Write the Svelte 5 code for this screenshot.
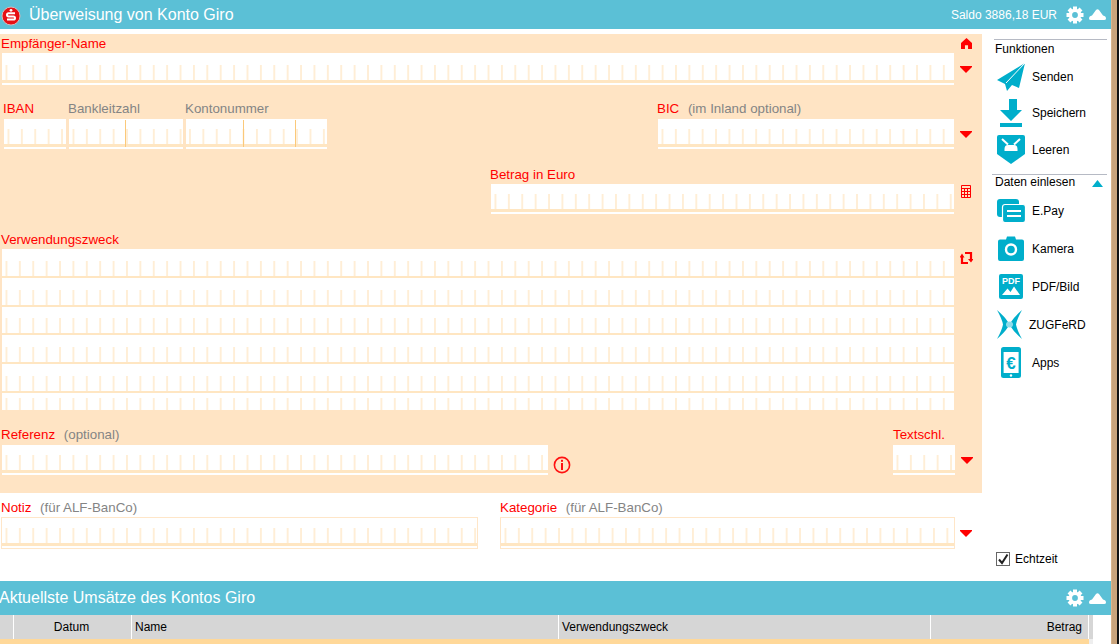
<script>
  const lines = [0, 1, 2, 3, 4];
  const tableCols = [
    { label: '', cls: 'c0' },
    { label: 'Datum', cls: 'c1' },
    { label: 'Name', cls: 'c2' },
    { label: 'Verwendungszweck', cls: 'c3' },
    { label: 'Betrag', cls: 'c4' },
    { label: '', cls: 'c5' }
  ];
  const gearTeeth = [0, 45, 90, 135, 180, 225, 270, 315];
</script>

{#snippet gear()}
  <svg class="gear" viewBox="-9 -9 18 18" width="18" height="18" aria-hidden="true">
    {#each gearTeeth as a}
      <rect x="-2" y="-8.5" width="4" height="5" fill="#fff" transform="rotate({a})" />
    {/each}
    <circle r="4.6" fill="none" stroke="#fff" stroke-width="3.4" />
  </svg>
{/snippet}

{#snippet cloud()}
  <svg class="cloud" viewBox="0 0 17 11" width="17" height="11" aria-hidden="true">
    <path d="M0 9.5Q0 7 3 6.5L7 1Q8.5-.4 10 1L14 6.5Q17 7 17 9.5Q17 11 15 11H2Q0 11 0 9.5Z" fill="#fff" />
  </svg>
{/snippet}

{#snippet down()}
  <svg class="down" viewBox="0 0 12 7" width="12" height="7" aria-hidden="true">
    <path d="M0 0H12V1L6 7L0 1Z" fill="#f00" />
  </svg>
{/snippet}

<div class="app">
  <div class="main">
    <header class="bar bar--top">
      <svg class="logo" viewBox="0 0 20 20" width="20" height="20" aria-hidden="true">
        <circle cx="10" cy="10" r="9" fill="#e60f14" stroke="#d8b8b8" stroke-width="1" />
        <circle cx="10" cy="4.3" r="1.4" fill="#fff" />
        <path d="M14 7.3H7.6Q6 7.3 6 9Q6 10.4 7.6 10.4H12.4Q14 10.4 14 12Q14 13.6 12.4 13.6H6" fill="none" stroke="#fff" stroke-width="2" />
      </svg>
      <h1 class="bar__title">Überweisung von Konto Giro</h1>
      <span class="saldo">Saldo 3886,18 EUR</span>
      {@render gear()}
      {@render cloud()}
    </header>

    <div class="body">
      <div class="left">
        <form class="peach">
          <div class="row row--name">
            <div class="fld grow">
              <div class="lbl">Empfänger-Name</div>
              <div class="comb comb--32"></div>
            </div>
            <div class="side side--name">
              <svg viewBox="0 0 10 10" width="11" height="11" aria-hidden="true">
                <path d="M5 0L10 4.6V10H6.4V6.6H3.6V10H0V4.6Z" fill="#f00" />
              </svg>
              {@render down()}
            </div>
          </div>

          <div class="row row--bank">
            <div class="fld iban">
              <div class="lbl">IBAN</div>
              <div class="comb"></div>
            </div>
            <div class="fld blz">
              <div class="lbl muted">Bankleitzahl</div>
              <div class="comb"></div>
            </div>
            <div class="fld konto">
              <div class="lbl muted">Kontonummer</div>
              <div class="comb"></div>
            </div>
            <div class="fld bic">
              <div class="lbl">BIC <span class="muted note">(im Inland optional)</span></div>
              <div class="comb"></div>
            </div>
            <div class="side side--bank">{@render down()}</div>
          </div>

          <div class="row row--amount">
            <div class="fld amount">
              <div class="lbl">Betrag in Euro</div>
              <div class="comb"></div>
            </div>
            <div class="side side--amount">
              <svg viewBox="0 0 10 13" width="10" height="13" aria-hidden="true">
                <path d="M.5.5H9.5V12.5H.5ZM.5 3.5H9.5M.5 6.5H9.5M.5 9.5H9.5M3.5 3.5V12.5M6.5 3.5V12.5" fill="none" stroke="#f00" stroke-width="1" />
              </svg>
            </div>
          </div>

          <div class="row row--purpose">
            <div class="fld grow">
              <div class="lbl">Verwendungszweck</div>
              {#each lines as l (l)}
                <div class="comb comb--line"></div>
              {/each}
              <div class="comb comb--last"></div>
            </div>
            <div class="side side--purpose">
              <svg viewBox="0 0 13 14" width="13" height="14" aria-hidden="true">
                <path d="M5 2H11V9M2 5V12H8" fill="none" stroke="#f00" stroke-width="2.2" />
                <path d="M8 8H13.5L11 11.5ZM-.5 6.5H4.5L2 2.5Z" fill="#f00" />
              </svg>
            </div>
          </div>

          <div class="row row--ref">
            <div class="fld ref">
              <div class="lbl">Referenz <span class="muted note">(optional)</span></div>
              <div class="comb"></div>
            </div>
            <svg class="info" viewBox="0 0 18 18" width="18" height="18" aria-hidden="true">
              <circle cx="9" cy="9" r="7.6" fill="none" stroke="#f11" stroke-width="1.6" />
              <rect x="8" y="3.8" width="2" height="2" fill="#f11" />
              <rect x="8" y="7" width="2" height="7" fill="#f11" />
            </svg>
            <div class="fld key">
              <div class="lbl">Textschl.</div>
              <div class="comb"></div>
            </div>
            <div class="side side--key">{@render down()}</div>
          </div>
        </form>

        <div class="row row--extra">
          <div class="fld note-f">
            <div class="lbl">Notiz <span class="muted note">(für ALF-BanCo)</span></div>
            <div class="comb comb--box"></div>
          </div>
          <div class="fld cat">
            <div class="lbl">Kategorie <span class="muted note">(für ALF-BanCo)</span></div>
            <div class="comb comb--box"></div>
          </div>
          <div class="side side--cat">{@render down()}</div>
        </div>
      </div>

      <aside class="tools">
        <section class="group">
          <div class="group__head">Funktionen</div>
          <div class="tool tool--a">
            <span class="tool__icon">
              <svg viewBox="0 0 28 28" width="28" height="28" aria-hidden="true">
                <path d="M28 0L0 17L8 21L10 28L15 22L22 25Z" fill="#00aecb" />
                <path d="M28 0L9 20" stroke="#fff" stroke-width="1" />
              </svg>
            </span>
            <span>Senden</span>
          </div>
          <div class="tool tool--a">
            <span class="tool__icon">
              <svg viewBox="0 0 22 28" width="22" height="28" aria-hidden="true">
                <path d="M9 0H17V11H22L11 22L0 11H9ZM0 24H22V28H0Z" fill="#00aecb" />
              </svg>
            </span>
            <span>Speichern</span>
          </div>
          <div class="tool tool--a">
            <span class="tool__icon">
              <svg viewBox="0 0 28 29" width="28" height="29" aria-hidden="true">
                <path d="M2 0H26Q28 0 28 2V19L14 29L0 19V2Q0 0 2 0Z" fill="#00aecb" />
                <path d="M5 4L11 9.5M23 4L17 9.5" stroke="#fff" stroke-width="2" />
                <path d="M11 10H17Q20.5 10 20.5 14V16H7.5V14Q7.5 10 11 10Z" fill="#fff" />
              </svg>
            </span>
            <span>Leeren</span>
          </div>
        </section>

        <section class="group group--data">
          <div class="group__head group__head--data">
            <span>Daten einlesen</span>
            <svg viewBox="0 0 11 7" width="11" height="7" aria-hidden="true">
              <path d="M5.5 0L11 7H0Z" fill="#00aecb" />
            </svg>
          </div>
          <div class="tool">
            <span class="tool__icon">
              <svg viewBox="0 0 28 23" width="28" height="23" aria-hidden="true">
                <rect x="0" y="0" width="22" height="18" rx="3" fill="#00aecb" />
                <rect x="5.5" y="5.5" width="23" height="18" rx="2.5" fill="#00aecb" stroke="#fff" stroke-width="1.2" />
                <path d="M10 12H24M10 17H24" stroke="#fff" stroke-width="2" />
              </svg>
            </span>
            <span>E.Pay</span>
          </div>
          <div class="tool">
            <span class="tool__icon">
              <svg viewBox="0 0 26 25" width="26" height="25" aria-hidden="true">
                <path d="M2 3.5H8L9 .5H17L18 3.5H24Q26 3.5 26 5.5V23Q26 25 24 25H2Q0 25 0 23V5.5Q0 3.5 2 3.5Z" fill="#00aecb" />
                <circle cx="13" cy="13.5" r="5" fill="none" stroke="#fff" stroke-width="2.4" />
              </svg>
            </span>
            <span>Kamera</span>
          </div>
          <div class="tool">
            <span class="tool__icon">
              <svg viewBox="0 0 24 25" width="24" height="25" aria-hidden="true">
                <rect width="24" height="25" rx="2" fill="#00aecb" />
                <text x="12" y="10" text-anchor="middle" class="pdf">PDF</text>
                <path d="M3 21L8.5 14.5L11.5 18L15 12.5L21 21Z" fill="#fff" />
              </svg>
            </span>
            <span>PDF/Bild</span>
          </div>
          <div class="tool tool--zug">
            <span class="tool__icon">
              <svg viewBox="0 0 28 29" width="28" height="29" aria-hidden="true">
                <path d="M0 0Q8 7 11 12L9.5 14.5L11 17Q8 22 0 29Q5 20 6 14.5Q5 9 0 0Z" fill="#00aecb" />
                <path d="M25 0Q17 7 14 12L15.5 14.5L14 17Q17 22 25 29Q20 20 19 14.5Q20 9 25 0Z" fill="#00aecb" />
                <ellipse cx="12.5" cy="14.5" rx="3.5" ry="3" fill="#8fdcea" />
              </svg>
            </span>
            <span>ZUGFeRD</span>
          </div>
          <div class="tool">
            <span class="tool__icon">
              <svg viewBox="0 0 20 31" width="20" height="31" aria-hidden="true">
                <rect width="20" height="31" rx="2.5" fill="#00aecb" />
                <rect x="2.6" y="5" width="15" height="21" fill="#fff" />
                <text x="10" y="21.5" text-anchor="middle" class="euro">€</text>
                <circle cx="10" cy="28.5" r="1.2" fill="#fff" />
              </svg>
            </span>
            <span>Apps</span>
          </div>
        </section>

        <label class="live">
          <span class="live__box">
            <svg viewBox="0 0 12 12" width="12" height="12" aria-hidden="true">
              <path d="M2 6.5L5 10L10.5 1.5" fill="none" stroke="#222" stroke-width="2" />
            </svg>
          </span>
          Echtzeit
        </label>
      </aside>
    </div>

    <header class="bar bar--list">
      <h2 class="bar__title bar__title--list">Aktuellste Umsätze des Kontos Giro</h2>
      {@render gear()}
      {@render cloud()}
    </header>

    <div class="thead">
      {#each tableCols as c}
        <div class="th {c.cls}">{c.label}</div>
      {/each}
    </div>
    <div class="tfirst">
      <div class="tfirst__fill"></div>
      <div class="tfirst__end"></div>
    </div>
  </div>
  <div class="strip"></div>
  <div class="edge"></div>
</div>

<style>
  :global(body) { overflow: hidden; background: #fff; }
  .app { display: flex; width: 1120px; height: 644px; overflow: hidden; font-family: "Liberation Sans", Arial, sans-serif; font-size: 12px; color: #000; background: #fff; }
  .main { width: 1111px; flex: none; }
  .strip { width: 6px; flex: none; background: #c9a47c; border-left: 1px solid #d8b48c; box-sizing: border-box; }
  .edge { width: 2px; flex: none; background: #111; }

  .bar { display: flex; align-items: center; background: #5bc0d6; color: #fff; }
  .bar--top { height: 29px; margin-bottom: 5px; padding-left: 1px; }
  .bar--list { height: 34px; }
  .logo { flex: none; margin-top: 2px; }
  .bar__title { margin: 0 0 0 8px; font-size: 16px; font-weight: 400; flex: 1; }
  .bar__title--list { margin-left: -1px; }
  .saldo { margin-right: 9px; }
  .gear { flex: none; margin-right: 5px; }
  .cloud { flex: none; margin-right: 5px; }

  .body { display: flex; height: 547px; }
  .left { width: 982px; flex: none; }
  .peach { height: 459px; background: #ffe4c4; box-sizing: border-box; padding-top: 2px; }
  .row { display: flex; align-items: flex-start; }
  .fld { flex: none; }
  .grow { width: 952px; margin-left: 2px; }
  .grow .lbl { margin-left: -1px; }
  .lbl { height: 17px; line-height: 15px; font-size: 13.33px; color: #f00; margin-bottom: 1px; white-space: nowrap; }
  .muted { color: #848484; }
  .note { margin-left: 5px; }

  .comb {
    height: 30px;
    background:
      linear-gradient(#ffe6c2, #ffe6c2) left 0 bottom 2px / 100% 3px no-repeat,
      linear-gradient(90deg, #ffeed6 1.5px, transparent 1.5px) left 3.5px bottom 5px / 13.4px 15px repeat-x,
      #fff;
  }
  .comb--32 { height: 32px; }
  .comb--line {
    height: 28.8px;
    background:
      linear-gradient(#ffe6c2, #ffe6c2) left 0 bottom 0 / 100% 2px no-repeat,
      linear-gradient(90deg, #ffeed6 1.5px, transparent 1.5px) left 3.5px bottom 2px / 13.4px 15px repeat-x,
      #fff;
  }
  .comb--last { height: 17px; background: linear-gradient(90deg, #ffeed6 1.5px, transparent 1.5px) left 3.5px bottom 0 / 13.4px 12px repeat-x, #fff; }
  .comb--box { height: 30px; border: 1px solid #ffe6c8; }

  .row--name .lbl { margin-bottom: 0; }
  .side { flex: none; display: flex; flex-direction: column; align-items: center; width: 24px; }
  .down { display: block; }
  .side--name { margin-left: 0; padding-top: 2px; gap: 17px; }
  .row--bank { margin-top: 16px; }
  .iban { width: 62px; margin-left: 4px; }
  .iban .lbl { margin-left: -1px; }
  .blz { width: 114px; margin-left: 3px; }
  .blz .lbl { margin-left: -1px; }
  .blz .comb {
    background:
      linear-gradient(#fbc97a, #fbc97a) left 56px top 1px / 1px 27px no-repeat,
      linear-gradient(#ffe6c2, #ffe6c2) left 0 bottom 2px / 100% 3px no-repeat,
      linear-gradient(90deg, #ffeed6 1.5px, transparent 1.5px) left 3.5px bottom 5px / 13.4px 15px repeat-x,
      #fff;
  }
  .konto { width: 141px; margin-left: 3px; }
  .konto .lbl { margin-left: -1px; }
  .konto .comb {
    background:
      linear-gradient(#fbc97a, #fbc97a) left 57px top 1px / 1px 27px no-repeat,
      linear-gradient(#fbc97a, #fbc97a) left 109px top 1px / 1px 27px no-repeat,
      linear-gradient(#ffe6c2, #ffe6c2) left 0 bottom 2px / 100% 3px no-repeat,
      linear-gradient(90deg, #ffeed6 1.5px, transparent 1.5px) left 3px bottom 5px / 13.4px 15px repeat-x,
      #fff;
  }
  .bic { width: 296px; margin-left: 331px; }
  .bic .lbl { margin-left: -1px; }
  .side--bank { padding-top: 30px; }
  .row--amount { margin-top: 18px; }
  .amount { width: 463px; margin-left: 491px; }
  .amount .lbl { margin-left: -1px; height: 16px; }
  .side--amount { padding-top: 18px; }
  .row--purpose { margin-top: 18px; }
  .row--purpose .lbl { height: 16px; }
  .side--purpose { padding-top: 19px; }
  .row--ref { margin-top: 17px; }
  .ref { width: 546px; margin-left: 2px; }
  .ref .lbl { margin: 0 0 2px -1px; height: 16px; }
  .info { flex: none; margin: 29px 0 0 5px; }
  .key { width: 62px; margin-left: 322px; }
  .key .lbl { margin-bottom: 2px; height: 16px; }
  .side--key { padding-top: 30px; }

  .row--extra { padding-top: 7px; }
  .note-f { width: 477px; margin-left: 1px; }
  .note-f .lbl { margin-bottom: 0; }
  .cat { width: 455px; margin-left: 22px; }
  .cat .lbl { margin-bottom: 0; }
  .note-f .comb, .cat .comb { box-sizing: border-box; height: 32px; }
  .side--cat { padding-top: 30px; margin-left: -1px; }

  .tools { flex: 1; display: flex; flex-direction: column; padding-top: 5px; box-sizing: border-box; }
  .group { margin: 0 4px 0 12px; border-top: 1px solid #b6bac4; }
  .group--data { margin: 5px 4px 0 10px; }
  .group__head { height: 19px; line-height: 18px; padding-left: 1px; }
  .group__head--data { display: flex; align-items: center; justify-content: space-between; height: 17px; line-height: 14px; padding: 0 4px 0 3px; }
  .group__head--data span { margin-top: -2px; }
  .group__head--data svg { margin-top: 0; }
  .tool { display: flex; align-items: center; gap: 7px; height: 38px; padding-left: 5px; }
  .group:not(.group--data) .tool { padding-left: 3px; }
  .tool--a { height: 36px; }
  .tool--a:last-child { height: 37.5px; }
  .tool__icon { width: 28px; display: flex; justify-content: center; flex: none; }
  .tool--zug { gap: 4px; }
  .pdf { font: 700 9px "Liberation Sans", Arial, sans-serif; fill: #fff; }
  .euro { font: 700 17px "Liberation Sans", Arial, sans-serif; fill: #00aecb; }
  .live { margin: auto 0 15px 14px; display: flex; align-items: center; gap: 5px; height: 14px; }
  .live__box { width: 12px; height: 12px; border: 1px solid #666; display: block; }
  .live__box svg { display: block; }

  .thead { display: flex; height: 24px; line-height: 24px; width: 1093px; background: #d6d6d6; }
  .th { box-sizing: border-box; border-right: 1px solid #fff; padding: 0 3px; white-space: nowrap; }
  .c0 { width: 14px; }
  .c1 { width: 118px; text-align: center; padding: 0 2px 0 0; }
  .c2 { width: 427px; }
  .c3 { width: 372px; }
  .c4 { width: 158px; text-align: right; padding-right: 6px; }
  .c5 { width: 4px; border-right: 0; padding: 0; }
  .tfirst { display: flex; height: 5px; }
  .tfirst__fill { width: 1089px; background: #ffd899; }
  .tfirst__end { width: 4px; background: #eee; }
</style>
